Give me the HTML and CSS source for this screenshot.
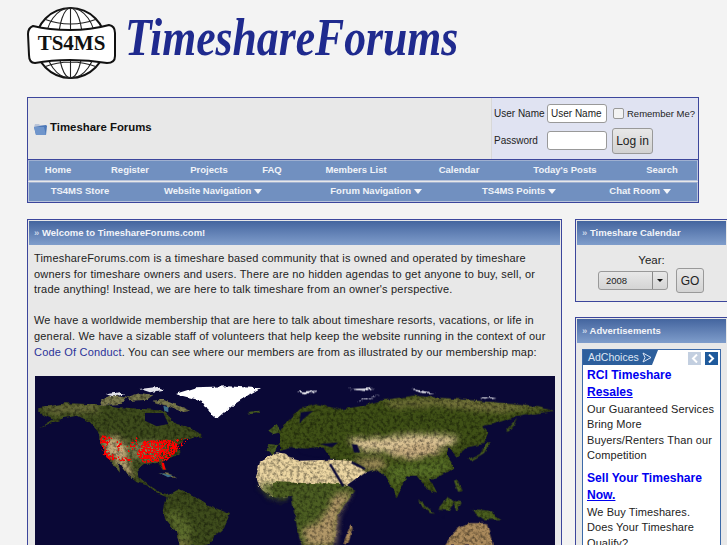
FILE: index.html
```html
<!DOCTYPE html>
<html lang="en">
<head>
  <meta charset="UTF-8" />
  <meta name="viewport" content="width=device-width, initial-scale=1.0" />
  <title>TimeshareForums</title>
  <link rel="stylesheet" href="styles.css">
</head>
<body>
  <div class="page">
    <!-- logo -->
    <div class="logo">
      <svg class="logo-mark" width="90" height="76" viewBox="0 0 90 76">
        <circle cx="43.5" cy="38" r="35" fill="#fff" stroke="#111" stroke-width="2"/>
        <g fill="none" stroke="#222" stroke-width="1.1">
          <ellipse cx="43.5" cy="38" rx="12" ry="35"/>
          <ellipse cx="43.5" cy="38" rx="25" ry="35"/>
          <path d="M43.5 3v70M17 14q26.500 10 53 0M10 26q33.500 8 67 0M10 50q33.500-8 67 0M17 62q26.500-10 53 0"/>
        </g>
        <path d="M6 21q-5 2-5 8l1 21q0 8 6 8 16-3 35-3t37 3q8 0 8-7v-23q0-7-6-8-18 5-39 5t-37-4z" fill="#fff" stroke="#111" stroke-width="2"/>
        <text x="44.500" y="45" class="logo-mark-text" text-anchor="middle">TS4MS</text>
      </svg>
      <span class="logo-name">TimeshareForums</span>
    </div>

    <!-- top box -->
    <div class="topbox">
      <div class="topbox-head">
        <div class="crumb">
          <svg width="15" height="14" viewBox="0 0 15 14">
            <path d="M1 5l1-3h4l1 1h6l1 2z" fill="#b9c4d8"/>
            <path d="M1 5l12-2 1 1-1 9H3z" fill="#4c78b8"/>
            <path d="M1 5l10 0 2 8H3z" fill="#6f95cb"/>
          </svg>
          <b>Timeshare Forums</b>
        </div>
        <form class="login">
          <label class="login-label">User Name</label>
          <input class="login-input" type="text" value="User Name">
          <label class="remember"><input type="checkbox">Remember Me?</label>
          <label class="login-label login-label-pass">Password</label>
          <input class="login-input login-input-pass" type="password">
          <button class="login-btn" type="button">Log in</button>
        </form>
      </div>
      <div class="nav nav-first">
        <a>Home</a><a>Register</a><a>Projects</a><a>FAQ</a><a>Members List</a><a>Calendar</a><a>Today's Posts</a><a>Search</a>
      </div>
      <div class="nav nav-second">
        <a>TS4MS Store</a>
        <a>Website Navigation <i class="arrow"></i></a>
        <a>Forum Navigation <i class="arrow"></i></a>
        <a>TS4MS Points <i class="arrow"></i></a>
        <a>Chat Room <i class="arrow"></i></a>
      </div>
    </div>

    <div class="columns">
      <!-- main column -->
      <div class="box">
        <h2 class="box-title"><span>»</span> Welcome to TimeshareForums.com!</h2>
        <div class="welcome">
          <p>TimeshareForums.com is a timeshare based community that is owned and operated by timeshare owners for timeshare owners and users. There are no hidden agendas to get anyone to buy, sell, or trade anything! Instead, we are here to talk timeshare from an owner's perspective.</p>
          <p>We have a worldwide membership that are here to talk about timeshare resorts, vacations, or life in general. We have a sizable staff of volunteers that help keep the website running in the context of our <a>Code Of Conduct</a>. You can see where our members are from as illustrated by our membership map:</p>
          <svg class="map" width="520" height="200" viewBox="0 0 520 200">
            <defs>
              <filter id="land" filterUnits="userSpaceOnUse" x="-100" y="-100" width="1900" height="900" color-interpolation-filters="sRGB">
                <feTurbulence type="fractalNoise" baseFrequency="0.04" numOctaves="4" seed="7" result="n"/>
                <feDisplacementMap in="SourceGraphic" in2="n" scale="13" xChannelSelector="R" yChannelSelector="G" result="d"/>
                <feGaussianBlur in="d" stdDeviation="1.5" result="b"/>
                <feTurbulence type="fractalNoise" baseFrequency="0.1" numOctaves="3" seed="3" result="m"/>
                <feColorMatrix in="m" values="0 0 0 0 0  0 0 0 0 0  0 0 0 0 0  1.100 0 0 0 -.44" result="s"/>
                <feComposite in="s" in2="b" operator="in" result="t"/>
                <feMerge><feMergeNode in="b"/><feMergeNode in="t"/></feMerge>
              </filter>
              <filter id="coast" filterUnits="userSpaceOnUse" x="-100" y="-100" width="1900" height="900" color-interpolation-filters="sRGB">
                <feTurbulence type="fractalNoise" baseFrequency="0.06" numOctaves="3" seed="2" result="n"/>
                <feDisplacementMap in="SourceGraphic" in2="n" scale="12" xChannelSelector="R" yChannelSelector="G"/>
                <feGaussianBlur stdDeviation="1.500"/>
              </filter>
              <filter id="soft" x="-30%" y="-30%" width="160%" height="160%"><feGaussianBlur stdDeviation="9"/></filter>
              <filter id="speck" filterUnits="userSpaceOnUse" x="200" y="150" width="340" height="170" color-interpolation-filters="sRGB">
                <feTurbulence type="fractalNoise" baseFrequency="0.17" numOctaves="2" seed="11"/>
                <feColorMatrix values="0 0 0 0 1  0 0 0 0 0  0 0 0 0 0  14 0 0 0 -7.500" result="r"/>
                <feComposite in="r" in2="SourceGraphic" operator="in"/>
              </filter>
              <filter id="speck-dense" filterUnits="userSpaceOnUse" x="200" y="150" width="340" height="170" color-interpolation-filters="sRGB">
                <feTurbulence type="fractalNoise" baseFrequency="0.17" numOctaves="2" seed="5"/>
                <feColorMatrix values="0 0 0 0 1  0 0 0 0 0  0 0 0 0 0  14 0 0 0 -5.800" result="r"/>
                <feComposite in="r" in2="SourceGraphic" operator="in"/>
              </filter>
              <clipPath id="clip-left">
                <path d="M55 118L95 110 135 103 200 105 240 105 300 115 370 120 430 125 470 165 510 175 540 195 550 207 520 203 495 212 470 232 482 250 450 268 425 280 440 305 428 303 415 282 372 285 355 298 358 325 378 342 420 370 445 378 478 360 520 378 570 410 630 435 612 475 585 500 565 530 480 530 468 490 438 455 430 432 440 385 410 372 385 350 350 340 320 315 295 280 300 308 280 285 255 255 242 225 240 195 210 160 170 140 130 148 60 178 100 152 75 140 55 128Z"/>
              </clipPath>
              <clipPath id="clip-east">
                <path d="M0 190L25 155 60 120 110 105 180 122 250 110 300 95 400 80 520 90 650 100 780 115 822 125 760 135 700 145 640 165 610 170 625 190 610 225 560 235 530 262 505 235 500 260 525 295 480 322 450 330 472 372 440 360 430 345 410 320 380 320 350 385 320 325 290 300 255 310 215 282 150 268 130 235 85 240 50 232 0 245Z"/>
              </clipPath>
            </defs>
            <rect width="520" height="200" fill="#0a0836"/>

            <!-- americas and west europe, coords of the left half at 3x -->
            <g transform="translate(-15 -7) scale(.3333)">
              <g filter="url(#land)">
                <path fill="#3e4c1c" d="M55 118L95 110 135 103 200 105 240 105 300 115 370 120 430 125 470 165 510 175 540 195 550 207 520 203 495 212 470 232 482 250 450 268 425 280 440 305 428 303 415 282 372 285 355 298 358 325 378 342 420 370 445 378 478 360 520 378 570 410 630 435 612 475 585 500 565 530 480 530 468 490 438 455 430 432 440 385 410 372 385 350 350 340 320 315 295 280 300 308 280 285 255 255 242 225 240 195 210 160 170 140 130 148 60 178 100 152 75 140 55 128Z"/>
                <g clip-path="url(#clip-left)">
                  <path fill="#6a6c3a" filter="url(#soft)" d="M50 110L230 100 240 130 100 135Z"/>
                  <path fill="#c6ac7c" filter="url(#soft)" d="M250 205L300 205 322 240 325 285 345 320 325 325 290 280 255 250Z"/>
                  <path fill="#808352" filter="url(#soft)" d="M320 225L400 215 440 240 400 275 340 270Z"/>
                  <path fill="#a08a5a" filter="url(#soft)" d="M470 490L490 470 505 530 480 530Z"/>
                  <path fill="#5a6a2c" filter="url(#soft)" d="M440 440L470 420 520 480 500 530 470 510Z"/>
                </g>
                <path fill="#7c7b4e" d="M240 95L265 80 320 85 305 105 245 108ZM395 95L430 92 510 125 490 130 450 115ZM320 85L360 72 400 78 380 92 335 95ZM415 310L450 315 472 325 445 322Z"/>
                <path fill="#465a22" d="M745 185L770 165 785 190 760 195ZM740 245L745 225 775 228 762 255ZM775 228L790 200 840 180 840 240 790 225ZM685 128L720 125 715 133 690 135Z"/>
                <path fill="#ecd6a2" d="M708 325L720 280 770 250 800 255 800 382 760 385 718 350Z"/>
                <path fill="#4c5e22" filter="url(#soft)" d="M716 350L760 345 800 350 800 392 760 390Z"/>
              </g>
              <path fill="#0a0836" d="M375 132L430 132 445 165 410 172 375 155Z"/>
              <g filter="url(#coast)">
                <path fill="#fff" d="M465 75L530 55 622 52 720 58 690 75 640 108 592 150 565 125 545 95Z"/>
                <path fill="#e4e4ec" d="M360 60L410 54 432 62 390 70ZM255 76L300 70 320 76 280 82Z"/>
              </g>
              <path fill="#3d6f8a" d="M430 110L445 115 445 130 433 125ZM420 312L458 320 444 325Z"/>

              <path fill="#f00" filter="url(#speck)" d="M243 198L278 205 272 225 258 238 285 262 340 268 335 278 275 274 250 258 240 225ZM290 215L305 215 305 245 290 245ZM320 230L345 205 360 205 350 240 325 250ZM440 212L510 208 490 230 470 250Z"/>
              <path fill="#f00" filter="url(#speck-dense)" d="M350 255L372 215 440 212 475 225 470 248 440 275 370 282Z"/>
              <path fill="#f00" filter="url(#speck-dense)" d="M245 198L262 205 258 222 245 220ZM250 245L285 268 270 274 248 256Z"/>
              <path fill="#f00" d="M424 280L432 282 437 303 429 301Z"/>
              <path fill="none" stroke="#f00" stroke-width="6" d="M138 128h0M128 146h0M105 150h0M367 152h0M296 166h0M288 178h0M320 186h0M50 302h0M88 314h0M96 319h0M103 321h0M686 133h0M500 270h0M706 268h0M793 290h0M795 383h0M815 367h0M740 243h0M758 232h0M762 252h0M780 178h0M768 172h0M760 170h0M750 180h0M775 188h0M800 186h0M810 184h0M805 210h0M818 208h0M835 228h0M832 205h0M404 319h0M472 330h0M494 330h0M500 330h0M514 345h0M520 354h0M516 363h0M476 356h0M484 356h0M432 372h0M416 368h0M388 348h0M394 350h0M350 326h0M354 328h0M330 321h0M321 308h0M357 283h0M380 283h0M350 297h0M495 214h0M510 212h0"/>
            </g>

            <!-- asia and africa, coords of the right half at 3x -->
            <g transform="translate(245 -7) scale(.3333)">
              <g filter="url(#land)">
                <path fill="#3f5016" d="M0 190L25 155 60 120 110 105 180 122 250 110 300 95 400 80 520 90 650 100 780 115 822 125 760 135 700 145 640 165 610 170 625 190 610 225 560 235 530 262 505 235 500 260 525 295 480 322 450 330 472 372 440 360 430 345 410 320 380 320 350 385 320 325 290 300 255 310 215 282 150 268 130 235 85 240 50 232 0 245Z"/>
                <g clip-path="url(#clip-east)">
                  <path fill="#77743e" filter="url(#soft)" d="M300 95L520 85 820 115 640 130 480 110 340 115Z"/>
                  <path fill="#e0c898" filter="url(#soft)" d="M200 210L320 205 390 195 520 200 540 212 480 240 400 262 320 250 240 245Z"/>
                  <path fill="#c9ae80" filter="url(#soft)" d="M330 245L400 222 460 225 490 245 420 270 350 265Z"/>
                  <path fill="#9b8a58" filter="url(#soft)" d="M220 270L300 265 330 290 300 300 255 305Z"/>
                  <path fill="#587028" filter="url(#soft)" d="M320 290L400 285 500 265 520 295 450 330 380 320 350 360 325 320Z"/>
                </g>
                <path fill="#ecd6a2" d="M-20 255L60 275 150 272 215 275 258 310 200 352 192 350 150 345 0 345Z"/>
                <path fill="#4c5e22" d="M-20 340L190 345 225 365 172 440 160 530 65 530 50 470 35 385 -20 382Z"/>
                <path fill="#b29868" filter="url(#soft)" d="M165 375L215 368 175 435 165 530 75 530 70 480 125 450Z"/>
                <path fill="#4a5e1e" d="M678 188L712 148 700 172 685 188ZM565 272L600 255 622 220 632 220 612 252 575 275ZM415 390L465 435 448 430 420 405ZM475 422L505 385 520 400 505 425ZM462 438L545 455 500 446ZM520 395L545 400 530 430ZM575 420L625 425 665 455 610 450ZM522 335L532 332 545 368 535 372Z"/>
                <path fill="#ab8a5c" d="M495 530L530 480 570 462 620 462 640 530ZM190 522L212 465 218 478 205 522Z"/>
              </g>
              <path fill="#0a0836" d="M215 225L232 228 240 250 222 250ZM120 225L175 220 155 235ZM62 130L100 125 70 150 58 165ZM50 238L130 240 150 268 90 262 60 255Z"/>
              <path fill="none" stroke="#0a0836" stroke-width="7" d="M150 285L190 352M215 280L255 300"/>
              <path fill="#e4e4ec" filter="url(#coast)" d="M50 68L112 65 85 76ZM205 60L285 57 255 66ZM395 60L465 72 425 72ZM230 100L300 78 250 90ZM600 85L650 85 620 90Z"/>
              <path fill="none" stroke="#f00" stroke-width="6" d="M108 150h0M130 150h0M110 174h0M30 180h0M18 188h0M2 188h0M72 198h0M28 210h0M38 206h0M50 204h0M55 228h0M88 216h0M114 216h0M102 245h0M150 270h0M13 290h0M36 366h0M14 383h0M195 303h0M203 303h0M240 300h0M256 308h0M323 277h0M336 288h0M372 290h0M408 290h0M456 258h0M505 238h0M600 254h0M318 314h0M318 328h0M336 325h0M385 312h0M458 320h0M497 314h0M510 307h0M518 298h0M350 355h0M352 380h0M435 348h0M442 395h0M452 405h0M464 438h0M523 340h0M526 348h0M530 354h0M540 366h0M632 486h0M122 522h0"/>
            </g>
          </svg>
        </div>
      </div>

      <!-- side column -->
      <div class="side">
        <div class="box cal">
          <h2 class="box-title"><span>»</span> Timeshare Calendar</h2>
          <div class="cal-body">
            <div class="cal-year">Year:</div>
            <div class="cal-row">
              <div class="fake-select"><span>2008</span><i class="select-btn"><i class="arrow arrow-dark"></i></i></div>
              <button class="go-btn" type="button">GO</button>
            </div>
          </div>
        </div>

        <div class="box ads">
          <h2 class="box-title"><span>»</span> Advertisements</h2>
          <div class="ads-body">
            <div class="adunit">
              <div class="ad-top">
                <div class="adchoices">AdChoices
                  <svg width="10" height="11" viewBox="0 0 10 11"><path d="M1 1l8 4.500-8 4.500 2-4.500z" fill="none" stroke="#dde6f4"/></svg>
                </div>
                <div class="ad-pager">
                  <span class="pager-btn pager-off"><svg width="7" height="9" viewBox="0 0 7 9"><path d="M6 .5L2 4.500 6 8.500" fill="none" stroke="#fff" stroke-width="2"/></svg></span>
                  <span class="pager-btn"><svg width="7" height="9" viewBox="0 0 7 9"><path d="M1 .5L5 4.500 1 8.500" fill="none" stroke="#fff" stroke-width="2"/></svg></span>
                </div>
              </div>
              <a class="ad-link">RCI Timeshare <u>Resales</u></a>
              <p class="ad-text">Our Guaranteed Services Bring More Buyers/Renters Than our Competition</p>
              <a class="ad-link">Sell Your Timeshare <u>Now.</u></a>
              <p class="ad-text">We Buy Timeshares. Does Your Timeshare Qualify?</p>
            </div>
          </div>
        </div>
      </div>
    </div>
  </div>
</body>
</html>
```

FILE: styles.css
```css
html, body {
  margin: 0;
  height: 545px;
  overflow: hidden;
}
body {
  background: #f3f3f3;
  color: #222;
  font-family: "Liberation Sans", Arial, sans-serif;
  font-size: 13px;
}
.page {
  width: 700px;
  padding-left: 27px;
}

/* logo */
.logo {
  height: 97px;
  display: flex;
  align-items: flex-start;
  gap: 8px;
  padding-top: 5px;
  box-sizing: border-box;
}
.logo-mark-text {
  font-family: "Liberation Serif", serif;
  font-weight: bold;
  font-size: 21px;
  fill: #111;
}
.logo-name {
  font-family: "Liberation Serif", serif;
  font-style: italic;
  font-weight: bold;
  font-size: 52px;
  line-height: 66px;
  color: #1f2a8e;
  transform: scaleX(.84);
  transform-origin: left;
}

/* top box */
.topbox {
  width: 672px;
  box-sizing: border-box;
  border: 1px solid #3c469c;
  background: #e8e8e8;
}
.topbox-head {
  display: flex;
  justify-content: space-between;
  height: 61px;
  border-bottom: 1px solid #3c469c;
}
.crumb {
  display: flex;
  align-items: center;
  gap: 2px;
  padding-left: 5px;
  font-size: 11.400px;
  color: #111;
}
.crumb b {
  margin-bottom: 4px;
}
.login {
  width: 207px;
  box-sizing: border-box;
  background: #e0e3f2;
  border-left: 1px solid #d8d8d8;
  display: grid;
  grid-template-columns: 53px 60px 1fr;
  grid-template-rows: 30px 26px;
  padding-left: 2px;
  align-items: center;
  font-size: 10px;
  color: #222;
}
.login-label {
  white-space: nowrap;
}
.login-label-pass {
  margin-bottom: 2px;
}
.login-input {
  width: 60px;
  height: 19px;
  box-sizing: border-box;
  border: 1px solid #999;
  border-radius: 3px;
  padding: 0 3px;
  background: #fff;
  font: 10px "Liberation Sans", Arial, sans-serif;
  color: #222;
}
.login-input-pass {
  margin-bottom: 2px;
}
.remember {
  display: flex;
  align-items: center;
  gap: 3px;
  margin-left: 6px;
  white-space: nowrap;
  font-size: 9.500px;
}
.remember input {
  appearance: none;
  width: 11px;
  height: 11px;
  margin: 0;
  background: #f3f3f3;
  border: 1px solid #999;
  border-radius: 2px;
}
.login-btn {
  width: 41px;
  height: 26px;
  margin-left: 5px;
  padding: 0;
  border: 1px solid #999;
  border-radius: 3px;
  background: linear-gradient(#e8e8e8, #d2d2d2);
  font: 12px "Liberation Sans", Arial, sans-serif;
  color: #222;
}

/* nav rows */
.nav {
  display: grid;
  height: 20px;
  background: #7190c0;
  border: 1px solid #b8c4dc;
  border-top-color: #9fb0d0;
  box-sizing: border-box;
  align-items: center;
  text-align: center;
  font-size: 9.500px;
  font-weight: bold;
  color: #f0f3f8;
}
.nav a {
  margin-bottom: 2px;
}
.nav-first {
  grid-template-columns: 58px 86px 72px 54px 114px 92px 120px 74px;
  height: 21px;
  margin-bottom: 1px;
}
.nav-second {
  grid-template-columns: 102px 164px 162px 124px 118px;
}
.nav-second a {
  margin-bottom: 3px;
}
.arrow {
  display: inline-block;
  width: 0;
  height: 0;
  border-left: 4px solid transparent;
  border-right: 4px solid transparent;
  border-top: 5px solid #f4f6fa;
}

/* columns */
.columns {
  display: grid;
  grid-template-columns: 535px 153px;
  column-gap: 13px;
  margin-top: 16px;
  width: 720px;
}
.box {
  border: 1px solid #3c469c;
  padding: 1px;
  background: #e8e8e8;
}
.box-title {
  margin: 0;
  height: 24px;
  line-height: 23px;
  padding-left: 5px;
  background: linear-gradient(#44659f, #7f9dcb);
  color: #f2f4f9;
  font-size: 9.500px;
  font-weight: bold;
}
.box-title span {
  color: #c9d4e8;
}
.welcome {
  padding: 6px 5px 0;
  height: 400px;
}
.welcome p {
  margin: 0 0 15.600px;
  line-height: 15.600px;
  font-size: 11px;
  letter-spacing: .185px;
}
.welcome a {
  color: #2a3299;
}
.map {
  display: block;
  margin: 1px 0 0 1px;
}

/* calendar */
.cal {
  height: 79px;
  overflow: hidden;
}
.cal-body {
  text-align: center;
  font-size: 11.500px;
}
.cal-year {
  margin-top: 8px;
  line-height: 15px;
}
.cal-row {
  display: flex;
  align-items: center;
  gap: 8px;
  padding-left: 21px;
  margin-top: 0;
}
.fake-select {
  width: 70px;
  height: 19px;
  box-sizing: border-box;
  border: 1px solid #999;
  border-radius: 3px;
  background: linear-gradient(#e8e8e8, #d4d4d4);
  display: flex;
  justify-content: space-between;
  align-items: center;
  padding-left: 7px;
  font-size: 9.500px;
}
.select-btn {
  width: 14px;
  height: 17px;
  border-left: 1px solid #888;
  display: flex;
  align-items: center;
  justify-content: center;
}
.arrow-dark {
  border-left-width: 3px;
  border-right-width: 3px;
  border-top: 3px solid #111;
  margin: 0;
}
.go-btn {
  width: 28px;
  height: 25px;
  padding: 0;
  border: 1px solid #999;
  border-radius: 3px;
  background: linear-gradient(#e8e8e8, #d4d4d4);
  font: 12px "Liberation Sans", Arial, sans-serif;
  color: #222;
}

/* ad */
.ads {
  margin-top: 15px;
}
.ads-body {
  padding: 6px 5px 0;
}
.adunit {
  width: 139px;
  height: 300px;
  box-sizing: border-box;
  background: #fff;
  border: 1px solid #3c6aa8;
  padding: 0 0 0 4px;
}
.ad-top {
  display: flex;
  justify-content: space-between;
  margin: 0 0 0 -4px;
  height: 17px;
}
.adchoices {
  width: 75px;
  height: 15px;
  box-sizing: border-box;
  background: #2d5f9c;
  clip-path: polygon(0 0, 100% 0, 92% 100%, 0 100%);
  color: #dde6f4;
  font-size: 10.500px;
  line-height: 15px;
  padding-left: 5px;
}
.adchoices svg {
  vertical-align: -2px;
}
.ad-pager {
  display: flex;
  gap: 4px;
  padding: 2px 2px 0 0;
}
.pager-btn {
  width: 13px;
  height: 13px;
  background: #1f5a9c;
  display: flex;
  align-items: center;
  justify-content: center;
}
.pager-off {
  background: #c3cfe0;
}
.ad-link {
  display: block;
  color: #0000f0;
  font-size: 12.100px;
  font-weight: bold;
  line-height: 17.300px;
}
.ad-text {
  margin: 0 0 6px;
  max-width: 128px;
  font-size: 11px;
  line-height: 15.600px;
  color: #222;
  letter-spacing: .1px;
}
```
